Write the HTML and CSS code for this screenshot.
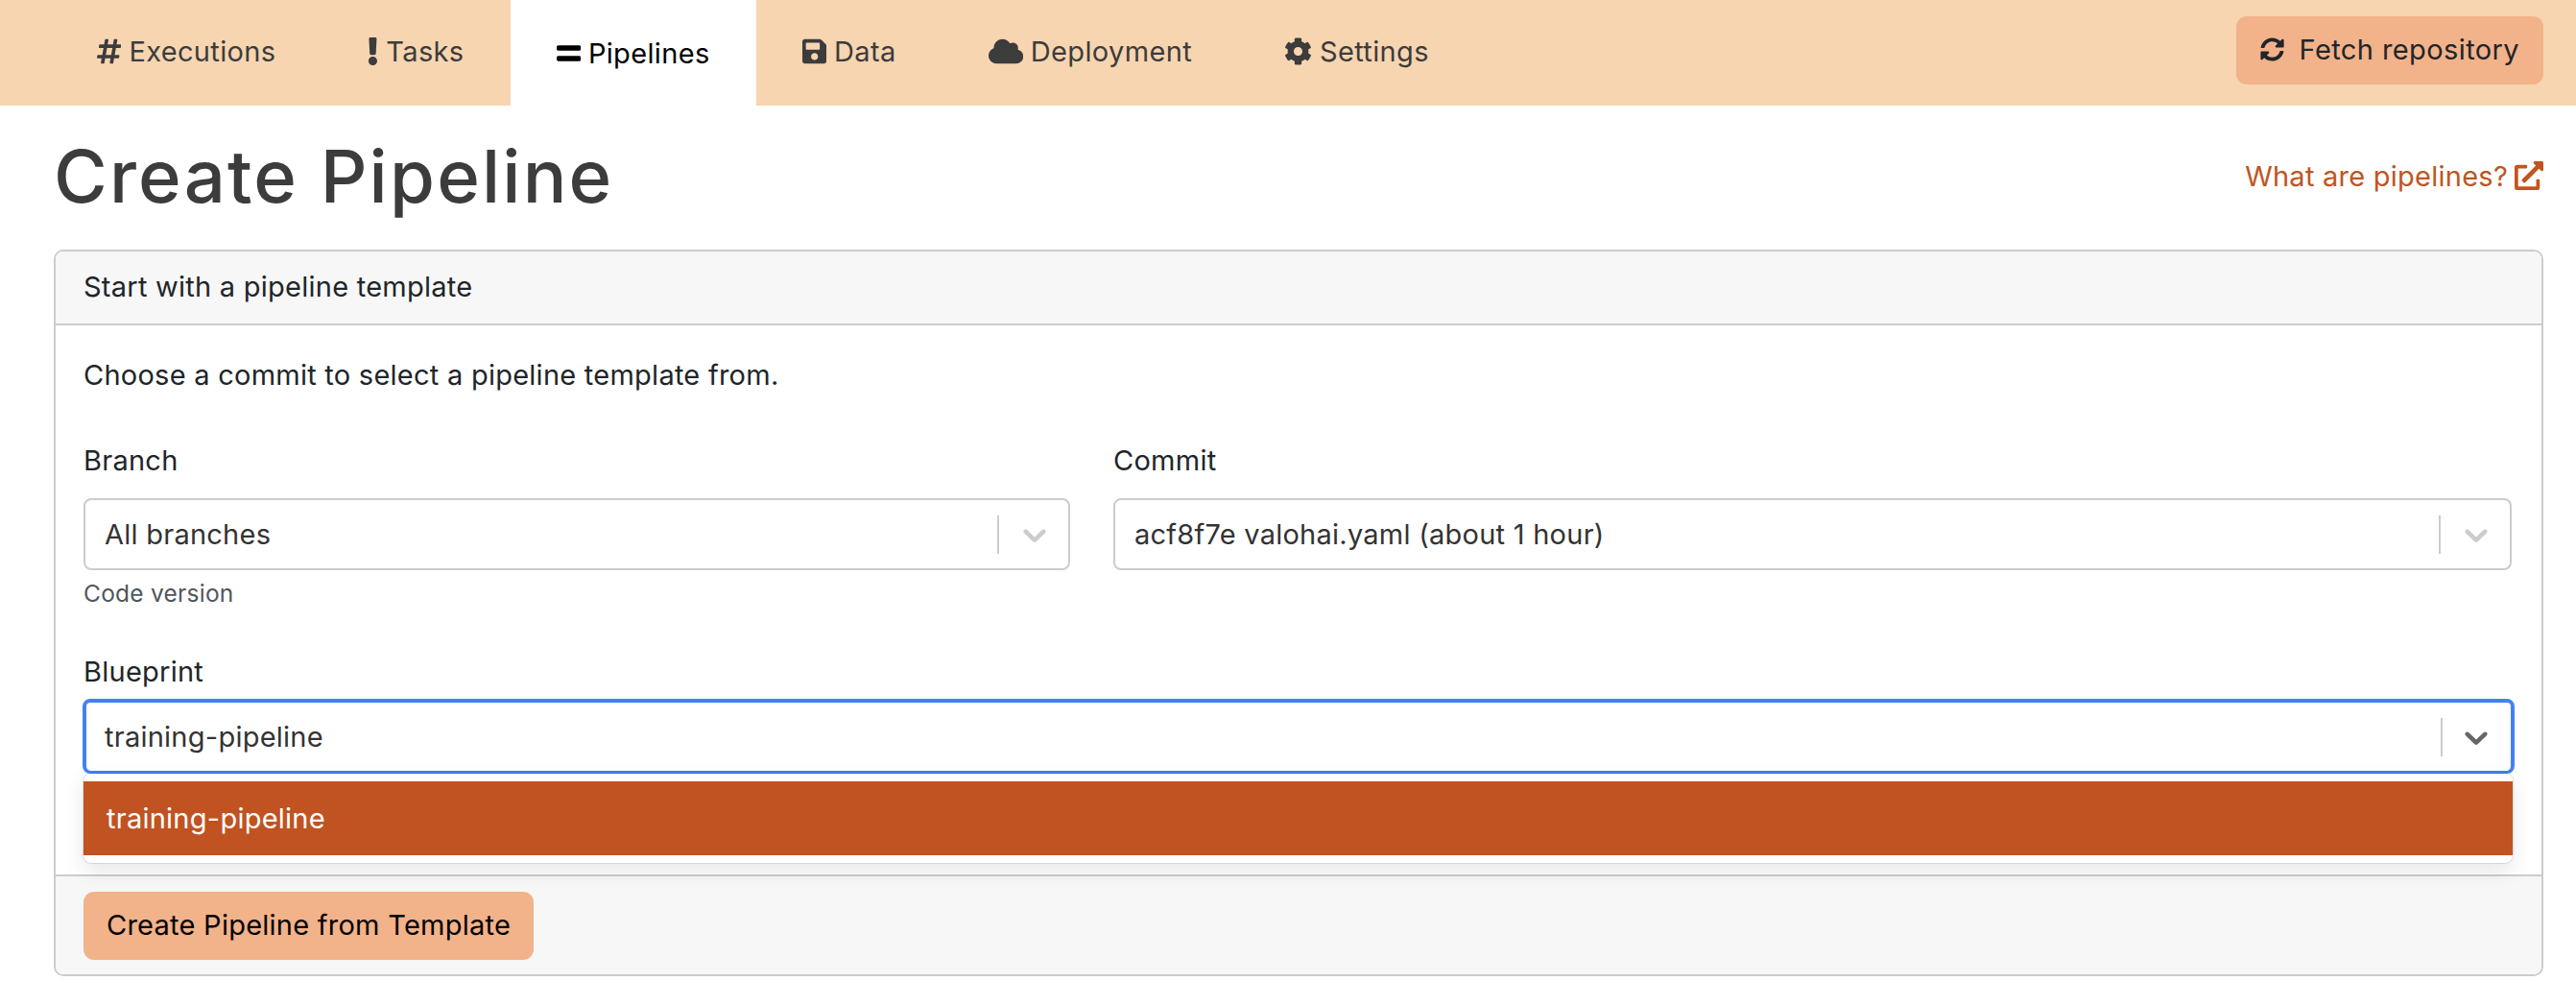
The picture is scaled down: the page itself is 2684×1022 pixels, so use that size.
FILE: index.html
```html
<!DOCTYPE html>
<html lang="en">
<head>
    <meta charset="UTF-8">
    <title>Create Pipeline</title>
    <link rel="stylesheet" href="styles.css">
</head>
<body>

<nav class="topNav">
    <a class="navTab">
        <svg class="navIcon" viewBox="0 0 448 512"><path d="M440.667 182.109l7.143-40c1.313-7.355-4.342-14.109-11.813-14.109h-74.81l14.623-81.891C377.123 38.754 371.468 32 363.997 32h-40.632a12 12 0 0 0-11.813 9.891L296.175 128H197.54l14.623-81.891C213.477 38.754 207.822 32 200.35 32h-40.632a12 12 0 0 0-11.813 9.891L132.528 128H53.432a12 12 0 0 0-11.813 9.891l-7.143 40C33.163 185.246 38.818 192 46.289 192h74.81L98.242 320H19.146a12 12 0 0 0-11.813 9.891l-7.143 40C-1.123 377.246 4.532 384 12.003 384h74.81L72.19 465.891C70.877 473.246 76.532 480 84.003 480h40.632a12 12 0 0 0 11.813-9.891L151.825 384h98.634l-14.623 81.891C234.523 473.246 240.178 480 247.65 480h40.632a12 12 0 0 0 11.813-9.891L315.472 384h79.096a12 12 0 0 0 11.813-9.891l7.143-40c1.313-7.355-4.342-14.109-11.813-14.109h-74.81l22.857-128h79.096a12 12 0 0 0 11.813-9.891zM261.889 320h-98.634l22.857-128h98.634l-22.857 128z"/></svg>
        Executions
    </a>
    <a class="navTab">
        <svg class="navIcon" viewBox="0 0 192 512"><path d="M176 432c0 44.112-35.888 80-80 80s-80-35.888-80-80 35.888-80 80-80 80 35.888 80 80zM25.26 25.199l13.6 272C39.499 309.972 50.041 320 62.83 320h66.34c12.789 0 23.331-10.028 23.97-22.801l13.6-272C167.425 11.49 156.496 0 142.77 0H49.23C35.504 0 24.575 11.49 25.26 25.199z"/></svg>
        Tasks
    </a>
    <a class="navTab navTabActive">
        <svg class="navIcon" viewBox="0 0 448 512"><path d="M416 304H32c-17.67 0-32 14.33-32 32v32c0 17.67 14.33 32 32 32h384c17.67 0 32-14.33 32-32v-32c0-17.67-14.33-32-32-32zm0-192H32c-17.67 0-32 14.33-32 32v32c0 17.67 14.33 32 32 32h384c17.67 0 32-14.33 32-32v-32c0-17.67-14.33-32-32-32z"/></svg>
        Pipelines
    </a>
    <a class="navTab">
        <svg class="navIcon" viewBox="0 0 448 512"><path d="M433.941 129.941l-83.882-83.882A48 48 0 0 0 316.118 32H48C21.49 32 0 53.49 0 80v352c0 26.51 21.49 48 48 48h352c26.51 0 48-21.49 48-48V163.882a48 48 0 0 0-14.059-33.941zM224 416c-35.346 0-64-28.654-64-64 0-35.346 28.654-64 64-64s64 28.654 64 64c0 35.346-28.654 64-64 64zm96-304.52V212c0 6.627-5.373 12-12 12H76c-6.627 0-12-5.373-12-12V108c0-6.627 5.373-12 12-12h228.52c3.183 0 6.235 1.264 8.485 3.515l3.48 3.48A11.996 11.996 0 0 1 320 111.48z"/></svg>
        Data
    </a>
    <a class="navTab">
        <svg class="navIcon" viewBox="0 0 640 512"><path d="M537.6 226.6c4.1-10.7 6.4-22.4 6.4-34.6 0-53-43-96-96-96-19.7 0-38.1 6-53.3 16.2C367 64.2 315.3 32 256 32c-88.4 0-160 71.6-160 160 0 2.7.1 5.4.2 8.1C40.2 219.8 0 273.2 0 336c0 79.5 64.5 144 144 144h368c70.7 0 128-57.3 128-128 0-61.9-44-113.6-102.4-125.4z"/></svg>
        Deployment
    </a>
    <a class="navTab">
        <svg class="navIcon" viewBox="0 0 512 512"><path d="M487.4 315.7l-42.6-24.6c4.3-23.2 4.3-47 0-70.2l42.6-24.6c4.9-2.8 7.1-8.6 5.5-14-11.1-35.6-30-67.8-54.7-94.6-3.8-4.1-10-5.1-14.8-2.3L380.8 110c-17.9-15.4-38.5-27.3-60.8-35.1V25.8c0-5.6-3.9-10.5-9.4-11.7-36.7-8.2-74.3-7.8-109.2 0-5.5 1.2-9.4 6.1-9.4 11.7V75c-22.2 7.9-42.8 19.8-60.8 35.1L88.7 85.5c-4.9-2.8-11-1.9-14.8 2.3-24.7 26.7-43.6 58.9-54.7 94.6-1.7 5.4.6 11.2 5.5 14L67.3 221c-4.3 23.2-4.3 47 0 70.2l-42.6 24.6c-4.9 2.8-7.1 8.6-5.5 14 11.1 35.6 30 67.8 54.7 94.6 3.8 4.1 10 5.1 14.8 2.3l42.6-24.6c17.9 15.4 38.5 27.3 60.8 35.1v49.2c0 5.6 3.9 10.5 9.4 11.7 36.7 8.2 74.3 7.8 109.2 0 5.5-1.2 9.4-6.1 9.4-11.7v-49.2c22.2-7.9 42.8-19.8 60.8-35.1l42.6 24.6c4.9 2.8 11 1.9 14.8-2.3 24.7-26.7 43.6-58.9 54.7-94.6 1.5-5.5-.7-11.3-5.6-14.1zM256 336c-44.1 0-80-35.9-80-80s35.9-80 80-80 80 35.9 80 80-35.9 80-80 80z"/></svg>
        Settings
    </a>
    <button class="fetchButton">
        <svg class="fetchIcon" viewBox="0 0 512 512"><path d="M370.72 133.28C339.458 104.008 298.888 87.962 255.848 88c-77.458.068-144.328 53.178-162.791 126.85-1.344 5.363-6.122 9.15-11.651 9.15H24.103c-7.498 0-13.194-6.807-11.807-14.176C33.933 94.924 134.813 8 256 8c66.448 0 126.791 26.136 171.315 68.685L463.03 40.97C478.149 25.851 504 36.559 504 57.941V192c0 13.255-10.745 24-24 24H345.941c-21.382 0-32.09-25.851-16.971-40.971l41.75-41.749zM32 296h134.059c21.382 0 32.09 25.851 16.971 40.971l-41.75 41.75c31.262 29.273 71.835 45.319 114.876 45.28 77.418-.07 144.315-53.144 162.787-126.849 1.344-5.363 6.122-9.15 11.651-9.15h57.304c7.498 0 13.194 6.807 11.807 14.176C478.067 417.076 377.187 504 256 504c-66.448 0-126.791-26.136-171.315-68.685L48.97 471.03C33.851 486.149 8 475.441 8 454.059V320c0-13.255 10.745-24 24-24z"/></svg>
        Fetch repository
    </button>
</nav>

<main class="pageContent">
    <div class="titleRow">
        <h1 class="pageTitle">Create Pipeline</h1>
        <a class="helpLink">
            What are pipelines?
            <svg class="helpIcon" viewBox="0 0 512 512"><path d="M432,320H400a16,16,0,0,0-16,16V448H64V128H208a16,16,0,0,0,16-16V80a16,16,0,0,0-16-16H48A48,48,0,0,0,0,112V464a48,48,0,0,0,48,48H400a48,48,0,0,0,48-48V336A16,16,0,0,0,432,320ZM488,0h-128c-21.37,0-32.05,25.91-17,41l35.73,35.73L135,320.37a24,24,0,0,0,0,34L157.67,377a24,24,0,0,0,34,0L435.28,133.32,471,169c15,15,41,4.5,41-17V24A24,24,0,0,0,488,0Z"/></svg>
        </a>
    </div>

    <section class="card">
        <div class="cardHeader">Start with a pipeline template</div>
        <div class="cardBody">
            <p class="intro">Choose a commit to select a pipeline template from.</p>

            <div class="formRow">
                <div class="field">
                    <label class="fieldLabel">Branch</label>
                    <div class="select">
                        <span class="selectValue">All branches</span>
                        <span class="selectDivider"></span>
                        <svg class="chevron" viewBox="0 0 20 20"><path d="M4.516 7.548c0.436-0.446 1.043-0.481 1.576 0l3.908 3.747 3.908-3.747c0.533-0.481 1.141-0.446 1.576 0 0.436 0.445 0.408 1.197 0 1.615-0.406 0.418-4.695 4.502-4.695 4.502-0.217 0.223-0.502 0.335-0.789 0.335s-0.572-0.112-0.79-0.335c0 0-4.287-4.084-4.695-4.502s-0.436-1.17 0-1.615z"/></svg>
                    </div>
                    <div class="helpText">Code version</div>
                </div>
                <div class="field">
                    <label class="fieldLabel">Commit</label>
                    <div class="select">
                        <span class="selectValue">acf8f7e valohai.yaml (about 1 hour)</span>
                        <span class="selectDivider"></span>
                        <svg class="chevron" viewBox="0 0 20 20"><path d="M4.516 7.548c0.436-0.446 1.043-0.481 1.576 0l3.908 3.747 3.908-3.747c0.533-0.481 1.141-0.446 1.576 0 0.436 0.445 0.408 1.197 0 1.615-0.406 0.418-4.695 4.502-4.695 4.502-0.217 0.223-0.502 0.335-0.789 0.335s-0.572-0.112-0.79-0.335c0 0-4.287-4.084-4.695-4.502s-0.436-1.17 0-1.615z"/></svg>
                    </div>
                </div>
            </div>

            <div class="field blueprintField">
                <label class="fieldLabel">Blueprint</label>
                <div class="select selectFocused">
                    <span class="selectValue">training-pipeline</span>
                    <span class="selectDivider"></span>
                    <svg class="chevron" viewBox="0 0 20 20"><path d="M4.516 7.548c0.436-0.446 1.043-0.481 1.576 0l3.908 3.747 3.908-3.747c0.533-0.481 1.141-0.446 1.576 0 0.436 0.445 0.408 1.197 0 1.615-0.406 0.418-4.695 4.502-4.695 4.502-0.217 0.223-0.502 0.335-0.789 0.335s-0.572-0.112-0.79-0.335c0 0-4.287-4.084-4.695-4.502s-0.436-1.17 0-1.615z"/></svg>
                    <div class="selectMenu">
                        <div class="selectOption">training-pipeline</div>
                    </div>
                </div>
            </div>
        </div>
        <div class="cardFooter">
            <button class="createButton">Create Pipeline from Template</button>
        </div>
    </section>
</main>

</body>
</html>
```

FILE: styles.css
```css
body {
    margin: 0;
    font-family: "Inter", "Liberation Sans", sans-serif;
    font-size: 29px;
    letter-spacing: 0.25px;
    color: #212529;
    background-color: white;
}
.topNav {
    display: flex;
    align-items: center;
    height: 110px;
    padding: 0 34px 0 53px;
    background-color: #f7d5b0;
}
.navTab {
    display: flex;
    align-items: center;
    gap: 8px;
    height: 106px;
    padding: 0 48px 4px;
    color: #3c3c3c;
    letter-spacing: 0.35px;
    white-space: nowrap;
}
.navTabActive {
    height: 110px;
    padding-bottom: 0;
    background-color: white;
    color: black;
}
.navIcon {
    height: 29px;
    fill: currentColor;
}
.fetchButton {
    display: flex;
    align-items: center;
    gap: 16px;
    height: 71px;
    margin-left: auto;
    margin-bottom: 5px;
    padding: 0 25px 2px;
    border: none;
    border-radius: 11px;
    background-color: #f2b28a;
    color: #212529;
    font: inherit;
    letter-spacing: 0.4px;
}
.fetchIcon {
    width: 25px;
    height: 25px;
    fill: currentColor;
}
.pageContent {
    padding: 0 34px 0 56px;
}
.titleRow {
    display: flex;
    align-items: center;
    justify-content: space-between;
    height: 150px;
    padding-bottom: 4px;
    box-sizing: border-box;
}
.pageTitle {
    margin: 0;
    font-size: 76px;
    font-weight: 550;
    letter-spacing: 2.2px;
    color: #3c3c3c;
}
.helpLink {
    display: flex;
    align-items: center;
    gap: 7px;
    color: #c05521;
}
.helpIcon {
    width: 30px;
    height: 30px;
    fill: currentColor;
}
.card {
    border: 2px solid #ccc;
    border-radius: 10px;
}
.cardHeader {
    display: flex;
    align-items: center;
    height: 77px;
    padding: 0 29px 2px;
    box-sizing: border-box;
    border-bottom: 2px solid #ccc;
    border-radius: 8px 8px 0 0;
    background-color: #f7f7f7;
}
.cardBody {
    height: 572px;
    padding: 0 31px 0 29px;
    box-sizing: border-box;
}
.intro {
    margin: 0;
    padding-top: 35px;
    line-height: 34px;
}
.formRow {
    display: grid;
    grid-template-columns: 1028px 1fr;
    gap: 45px;
    margin-top: 55px;
}
.fieldLabel {
    display: block;
    height: 56px;
    line-height: 34px;
}
.select {
    position: relative;
    display: flex;
    align-items: center;
    height: 75px;
    padding: 0 15px 0 20px;
    box-sizing: border-box;
    border: 2px solid #ccc;
    border-radius: 8px;
    background-color: white;
}
.selectValue {
    flex: 1;
    color: #333;
}
.selectDivider {
    width: 2px;
    height: 40px;
    background-color: #ccc;
}
.chevron {
    width: 40px;
    height: 40px;
    margin-left: 17px;
    fill: #ccc;
}
.helpText {
    margin-top: 11px;
    font-size: 24.5px;
    line-height: 26px;
    color: #50565c;
}
.blueprintField {
    margin-top: 52px;
}
.blueprintField .fieldLabel {
    height: 45px;
}
.selectFocused {
    width: calc(100% + 4px);
    height: 78px;
    margin-left: -1px;
    padding-left: 19px;
    padding-right: 16px;
    border: 4px solid #4480f5;
    border-bottom-width: 3px;
}
.selectFocused .chevron {
    margin-left: 15px;
    fill: #666;
}
.selectMenu {
    position: absolute;
    top: 74px;
    left: -3px;
    right: -2px;
    padding: 8px 0;
    border-radius: 8px;
    background-color: white;
    box-shadow: 0 0 0 1px rgba(0, 0, 0, 0.1), 0 8px 22px rgba(0, 0, 0, 0.1);
}
.selectOption {
    display: flex;
    align-items: center;
    height: 77px;
    padding-left: 24px;
    background-color: #c05321;
    color: white;
}
.cardFooter {
    display: flex;
    align-items: center;
    height: 102px;
    padding: 0 29px;
    border-top: 2px solid #ccc;
    border-radius: 0 0 8px 8px;
    background-color: #f7f7f7;
}
.createButton {
    height: 71px;
    padding: 0 24px 2px;
    border: none;
    border-radius: 11px;
    background-color: #f2b28a;
    color: black;
    font: inherit;
    letter-spacing: inherit;
}
```
